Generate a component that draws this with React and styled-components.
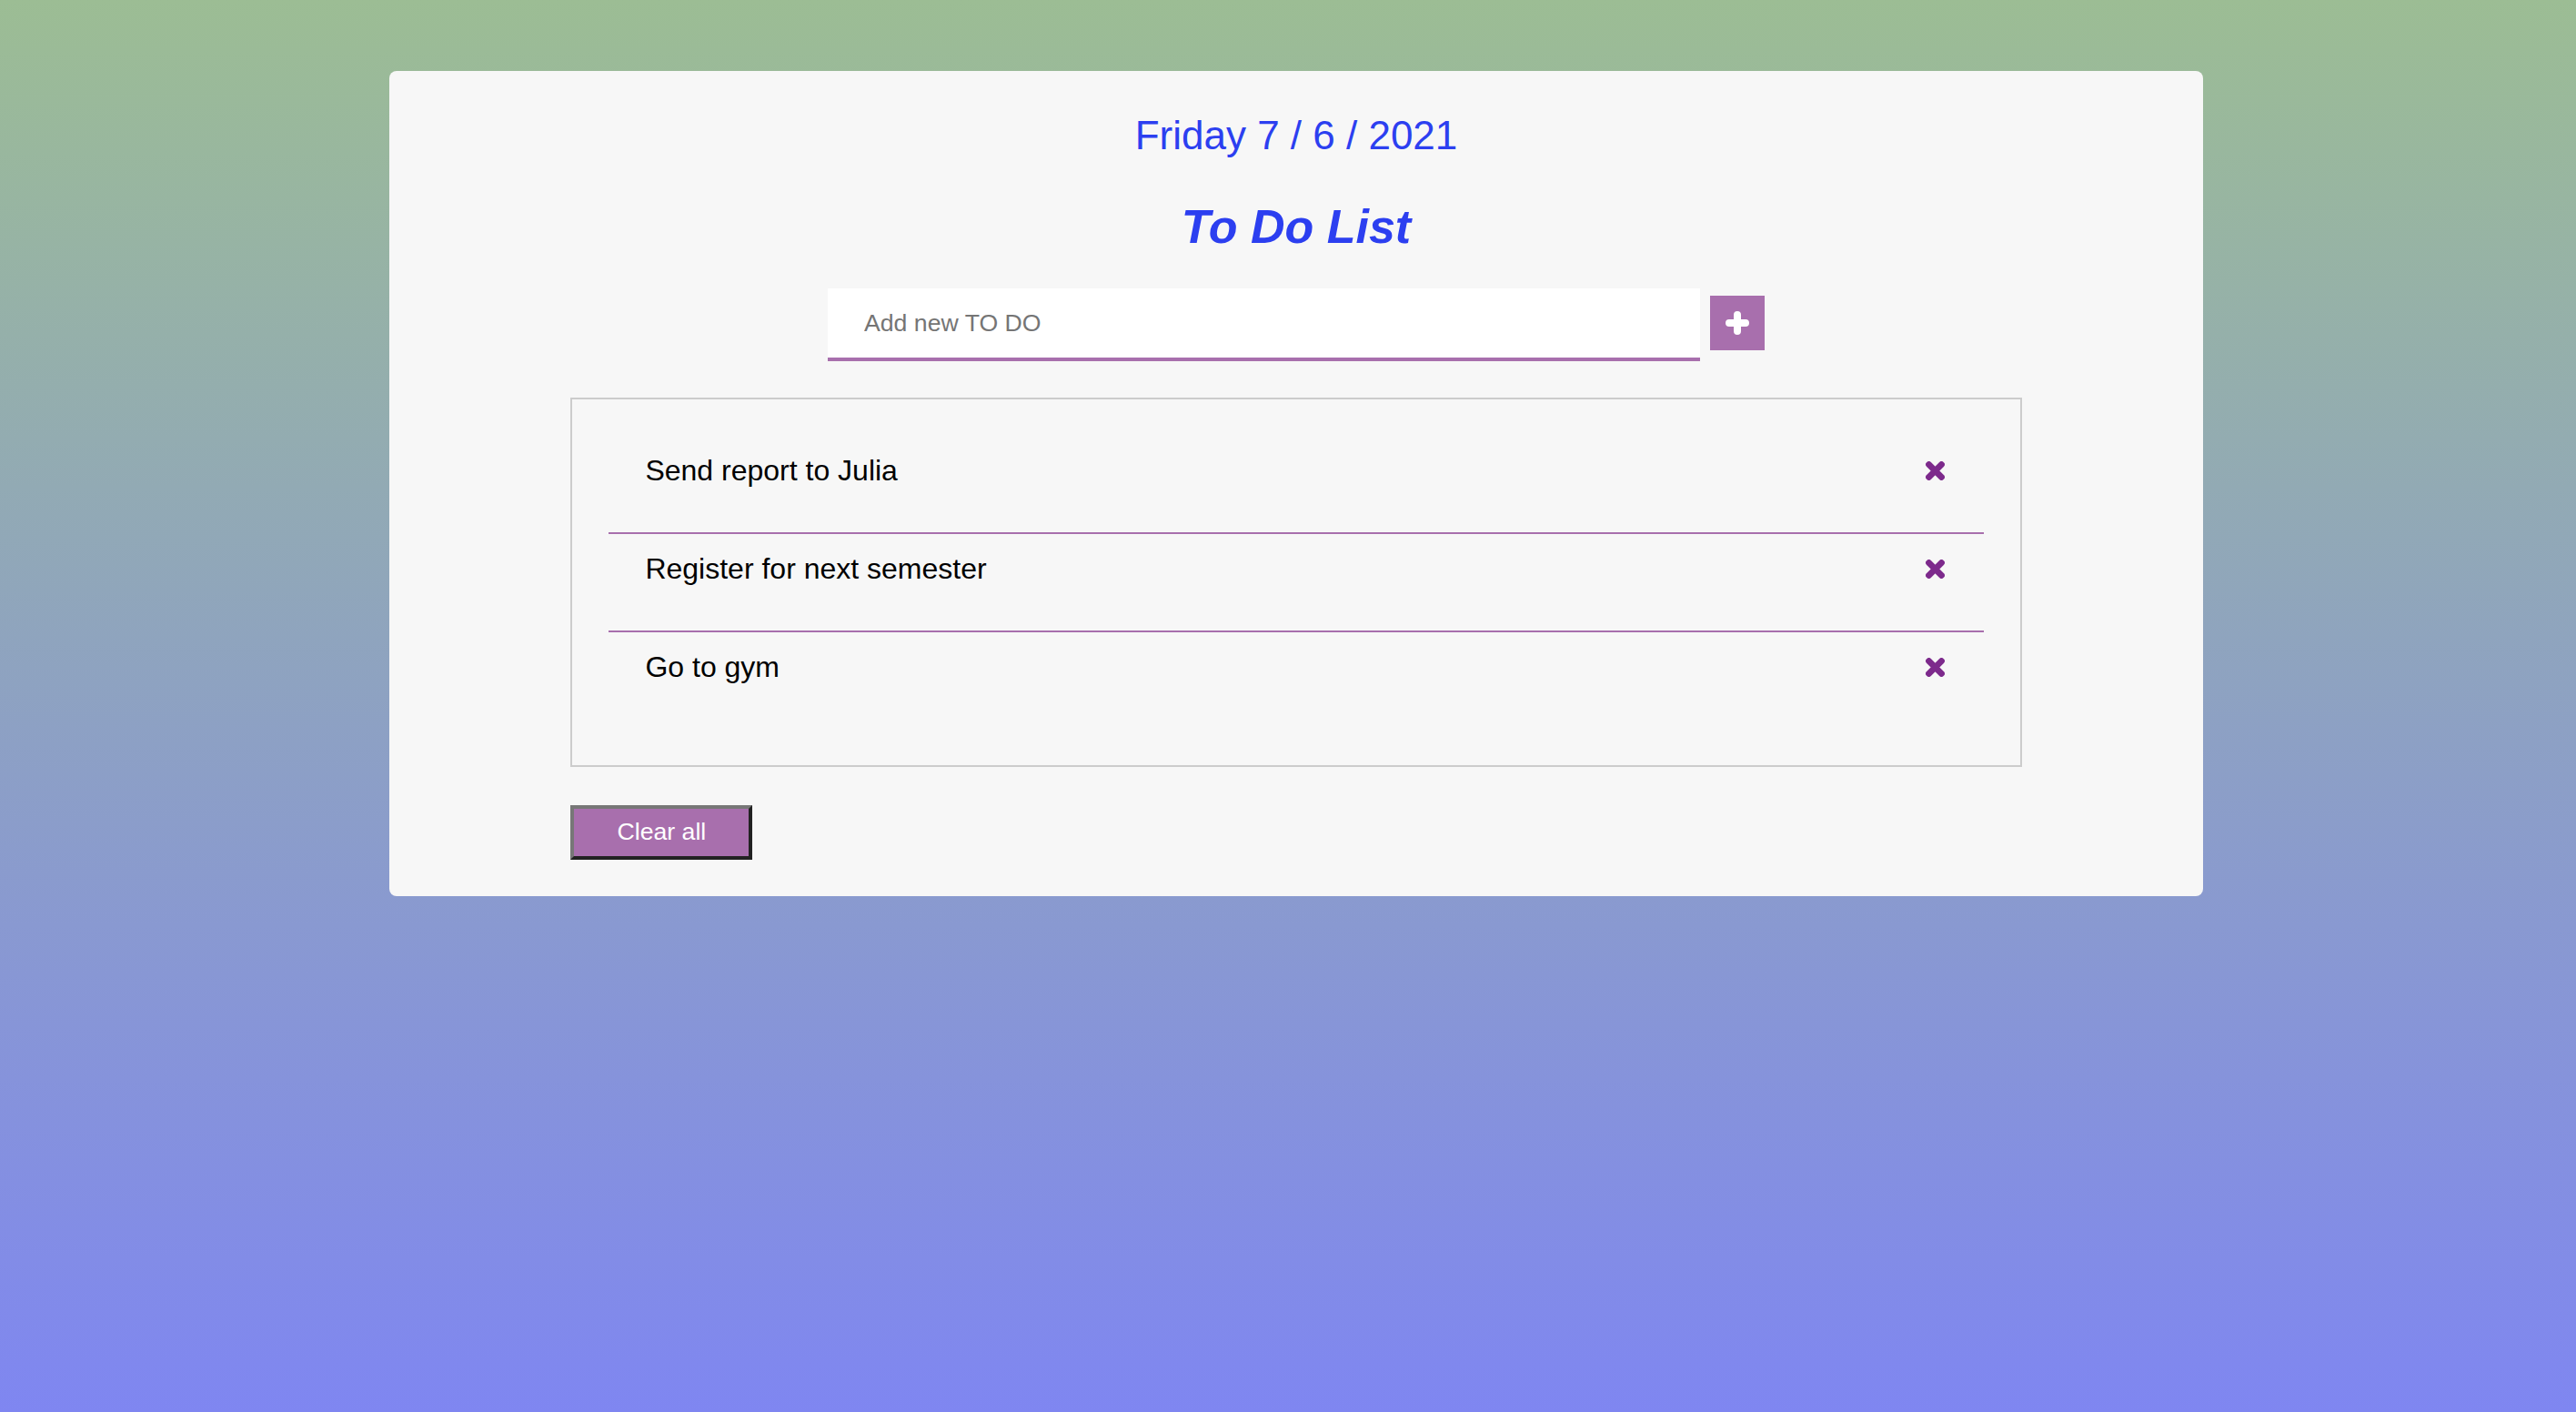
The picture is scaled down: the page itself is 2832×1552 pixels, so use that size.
import React from "react";
import styled, { createGlobalStyle } from "styled-components";

const GlobalStyle = createGlobalStyle`
  html, body { margin: 0; padding: 0; }
  body {
    min-height: 100vh;
    background: linear-gradient(to bottom, #9cbd94 0%, #7f86f1 100%);
    font-family: "Liberation Sans", Arial, Helvetica, sans-serif;
  }
  * { box-sizing: border-box; }
`;

const Page = styled.div`
  min-height: 100vh;
  padding: 78px 0 0 18px;
`;

const Card = styled.main`
  width: 1994px;
  margin: 0 auto;
  background: #f7f7f7;
  border-radius: 8px;
  padding: 46px 0 40px;
  display: flex;
  flex-direction: column;
  align-items: center;
`;

const DateLine = styled.div`
  font-size: 44px;
  line-height: 1.15;
  color: #2c3ff0;
  text-align: center;
`;

const Title = styled.h1`
  margin: 45px 0 0;
  font-size: 52px;
  line-height: 1.15;
  font-weight: 700;
  font-style: italic;
  color: #2c3ff0;
  text-align: center;
`;

const InputRow = styled.form`
  margin-top: 38px;
  display: flex;
  align-items: center;
  gap: 11px;
`;

const TodoInput = styled.input`
  width: 959px;
  height: 80px;
  border: none;
  border-bottom: 4px solid #a86fad;
  background: #fff;
  padding: 0 40px;
  font-family: "Liberation Sans", Arial, sans-serif;
  font-size: 26.67px;
  color: #000;
  outline: none;
  &::placeholder { color: #757575; }
`;

const AddButton = styled.button`
  width: 60px;
  height: 60px;
  margin-top: -4px;
  border: none;
  padding: 0;
  background: #a86fad;
  display: flex;
  align-items: center;
  justify-content: center;
  cursor: pointer;
`;

const Section = styled.section`
  width: 80%;
  margin-top: 40px;
  display: flex;
  flex-direction: column;
  align-items: flex-start;
`;

const ListBox = styled.ul`
  width: 100%;
  margin: 0;
  list-style: none;
  border: 2px solid #cccccc;
  padding: 40px 40px 40px;
`;

const Item = styled.li`
  display: flex;
  align-items: center;
  justify-content: space-between;
  padding: 20px 40px 49px;
  border-bottom: ${(p) => (p.$last ? "none" : "2px solid #a86fad")};
  font-size: 32px;
  line-height: 1.15;
  color: #000;
`;

const DeleteButton = styled.button`
  border: none;
  background: none;
  padding: 0;
  margin-right: 3px;
  display: flex;
  cursor: pointer;
`;

const ClearButton = styled.button`
  margin-top: 42px;
  width: 200px;
  height: 60px;
  background: #a86fad;
  border: 4px solid;
  border-color: #777777 #222222 #222222 #777777;
  color: #fff;
  font-family: "Liberation Sans", Arial, sans-serif;
  font-size: 26.67px;
  padding: 0;
  cursor: pointer;
`;

const PlusIcon = () => (
  <svg width="26" height="26" viewBox="0 0 26 26">
    <path d="M4 13H22M13 4V22" stroke="#fff" strokeWidth="8" strokeLinecap="round" />
  </svg>
);

const CrossIcon = () => (
  <svg width="21" height="21" viewBox="0 0 21 21">
    <path d="M3.6 3.6L17.4 17.4M17.4 3.6L3.6 17.4" stroke="#7d2a8c" strokeWidth="7" strokeLinecap="round" />
  </svg>
);

const todos = ["Send report to Julia", "Register for next semester", "Go to gym"];

export default function App() {
  return (
    <>
      <GlobalStyle />
      <Page>
        <Card>
          <DateLine>Friday 7 / 6 / 2021</DateLine>
          <Title>To Do List</Title>
          <InputRow onSubmit={(e) => e.preventDefault()}>
            <TodoInput type="text" placeholder="Add new TO DO" />
            <AddButton type="submit" aria-label="Add">
              <PlusIcon />
            </AddButton>
          </InputRow>
          <Section>
            <ListBox>
              {todos.map((t, i) => (
                <Item key={t} $last={i === todos.length - 1}>
                  <span>{t}</span>
                  <DeleteButton aria-label="Delete">
                    <CrossIcon />
                  </DeleteButton>
                </Item>
              ))}
            </ListBox>
            <ClearButton>Clear all</ClearButton>
          </Section>
        </Card>
      </Page>
    </>
  );
}
